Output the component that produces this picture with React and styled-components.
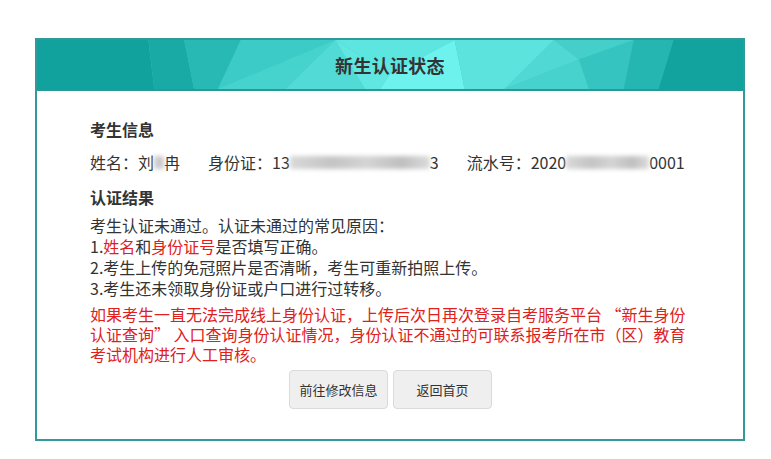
import React from 'react'
import styled, { createGlobalStyle } from 'styled-components'

const GlobalStyle = createGlobalStyle`
  body {
    margin: 0;
    background: #fff;
    font-family: "Noto Sans CJK SC", "Noto Sans", sans-serif;
    color: #333;
  }
`

const facets = [
  { points: '0,0 112,0 118,50 0,50', fill: '#11a29e' },
  { points: '112,0 148,0 158,50 118,50', fill: '#19aaa6' },
  { points: '148,0 205,0 182,50 158,50', fill: '#28b9b4' },
  { points: '205,0 300,0 182,50', fill: '#3ccbc6' },
  { points: '182,50 300,0 250,50', fill: '#46d3ce' },
  { points: '250,50 300,0 330,50', fill: '#52dbd6' },
  { points: '300,0 420,0 355,35', fill: '#5de5e0' },
  { points: '330,50 300,0 355,35 345,50', fill: '#60e7e2' },
  { points: '345,50 355,35 420,0 430,50', fill: '#6ef2ee' },
  { points: '420,0 520,0 470,50 430,50', fill: '#5ce3de' },
  { points: '520,0 545,20 470,50', fill: '#50d9d4' },
  { points: '470,50 545,20 555,50', fill: '#48d2ce' },
  { points: '520,0 600,0 545,20', fill: '#44cfcb' },
  { points: '545,20 600,0 590,50 555,50', fill: '#35c4bf' },
  { points: '600,0 640,0 625,50 590,50', fill: '#26b6b1' },
  { points: '640,0 710,0 710,50 625,50', fill: '#12a39f' },
]

const Header = () => (
  <Head>
    <Facets viewBox="0 0 710 50" preserveAspectRatio="none">
      {facets.map((f, i) => (
        <polygon key={i} points={f.points} fill={f.fill} />
      ))}
    </Facets>
    <Title>新生认证状态</Title>
  </Head>
)

const App = () => (
  <Page>
    <GlobalStyle />
    <Card>
      <Header />
      <Body>
        <SectionTitle>考生信息</SectionTitle>
        <InfoRow>
          <Field>
            姓名：刘<Blur w={10} />冉
          </Field>
          <Field>
            身份证：13<Blur w={140} />3
          </Field>
          <Field>
            流水号：2020<Blur w={83} />0001
          </Field>
        </InfoRow>
        <SectionTitle top={13}>认证结果</SectionTitle>
        <Reasons>
          <p>考生认证未通过。认证未通过的常见原因：</p>
          <p>
            1.<Red>姓名</Red>和<Red>身份证号</Red>是否填写正确。
          </p>
          <p>2.考生上传的免冠照片是否清晰，考生可重新拍照上传。</p>
          <p>3.考生还未领取身份证或户口进行过转移。</p>
        </Reasons>
        <Notice>
          如果考生一直无法完成线上身份认证，上传后次日再次登录自考服务平台 “新生身份认证查询”
          入口查询身份认证情况，身份认证不通过的可联系报考所在市（区）教育考试机构进行人工审核。
        </Notice>
        <Actions>
          <Button>前往修改信息</Button>
          <Button>返回首页</Button>
        </Actions>
      </Body>
    </Card>
  </Page>
)

export default App

const Page = styled.div`
  padding: 38px 0 18px 35px;
`

const Card = styled.div`
  width: 710px;
  box-sizing: border-box;
  border: 2px solid #34999b;
  background: #fff;
`

const Head = styled.div`
  position: relative;
  height: 49px;
  border-bottom: 2px solid #2a9896;
  display: flex;
  align-items: center;
  justify-content: center;
  overflow: hidden;
  background: #3fcac5;
`

const Facets = styled.svg`
  position: absolute;
  inset: 0;
  width: 100%;
  height: 100%;
`

const Title = styled.h1`
  position: relative;
  margin: 0;
  font-size: 18px;
  font-weight: 700;
  color: #333;
  letter-spacing: 0.3px;
`

const Body = styled.div`
  padding: 27px 52px 30px 53px;
`

const SectionTitle = styled.h2`
  margin: ${p => p.top || 0}px 0 0;
  font-size: 16px;
  font-weight: 700;
  line-height: 22px;
  color: #333;
`

const InfoRow = styled.div`
  display: flex;
  gap: 28px;
  margin-top: 11px;
  font-size: 16px;
  line-height: 22px;
`

const Field = styled.span`
  display: inline-flex;
  align-items: center;
  white-space: nowrap;
`

const Blur = styled.span`
  display: inline-block;
  width: ${p => p.w}px;
  height: 13px;
  background: linear-gradient(90deg, #d9d9d9, #c4c4c4 30%, #d4d4d4 55%, #bfbfbf 80%, #dcdcdc);
  filter: blur(2px);
`

const Reasons = styled.div`
  margin-top: 7px;
  font-size: 16px;
  line-height: 21px;
  color: #333;

  p {
    margin: 0;
  }
`

const Red = styled.span`
  color: #e0201c;
`

const Notice = styled.p`
  margin: 5px 0 0;
  font-size: 16px;
  line-height: 20px;
  color: #e0201c;
`

const Actions = styled.div`
  display: flex;
  justify-content: center;
  gap: 5px;
  margin-top: 6px;
`

const Button = styled.button`
  width: 99px;
  height: 39px;
  background: #efefef;
  border: 1px solid #dadada;
  border-radius: 4px;
  font-family: inherit;
  font-size: 13px;
  color: #333;
`
